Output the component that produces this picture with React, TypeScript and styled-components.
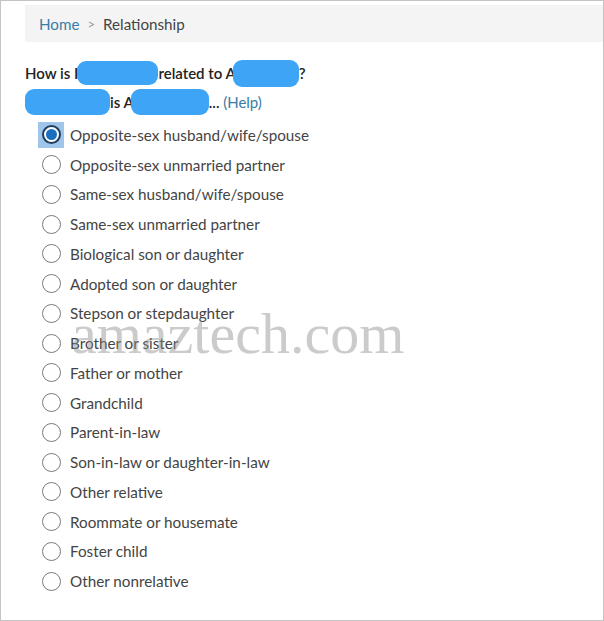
import React from 'react'
import styled, { createGlobalStyle } from 'styled-components'

const OPTIONS = [
  'Opposite-sex husband/wife/spouse',
  'Opposite-sex unmarried partner',
  'Same-sex husband/wife/spouse',
  'Same-sex unmarried partner',
  'Biological son or daughter',
  'Adopted son or daughter',
  'Stepson or stepdaughter',
  'Brother or sister',
  'Father or mother',
  'Grandchild',
  'Parent-in-law',
  'Son-in-law or daughter-in-law',
  'Other relative',
  'Roommate or housemate',
  'Foster child',
  'Other nonrelative',
]

const App = () => {
  return (
    <>
      <GlobalStyle />
      <Frame>
        <Breadcrumb>
          <Crumb href="#">Home</Crumb>
          <Sep>&gt;</Sep>
          <Current>Relationship</Current>
        </Breadcrumb>
        <Question>
          How is I<Redact w={81} h={24} style={{ marginLeft: -1 }} />
          {' '}related to A<Redact w={66} h={27} style={{ marginLeft: -3 }} />?
        </Question>
        <SubLine>
          <Redact w={85} h={26} />
          {' '}is A<Redact w={78} h={26} style={{ marginLeft: -3 }} />... <HelpLink href="#">(Help)</HelpLink>
        </SubLine>
        <OptionList>
          {OPTIONS.map((label, i) => (
            <Option key={label}>
              <RadioWrap focused={i === 0}>
                <Radio checked={i === 0} />
              </RadioWrap>
              <Label>{label}</Label>
            </Option>
          ))}
        </OptionList>
        <Watermark>amaztech.com</Watermark>
      </Frame>
    </>
  )
}

export default App

const GlobalStyle = createGlobalStyle`
  body {
    margin: 0;
    background: #fff;
    font-family: Lato, "Open Sans", sans-serif;
  }
`

const Frame = styled.div`
  position: relative;
  width: 604px;
  height: 621px;
  box-sizing: border-box;
  border: 1px solid #c4c4c4;
  padding: 4px 0 0 24px;
  overflow: hidden;
`

const Breadcrumb = styled.div`
  height: 37px;
  background: #f4f4f4;
  display: flex;
  align-items: center;
  padding-left: 14px;
  font-size: 15.2px;
  color: #444;
`

const Crumb = styled.a`
  color: #3a7ca5;
  text-decoration: none;
`

const Sep = styled.span`
  color: #999;
  margin: 0 8px;
  font-size: 13px;
`

const Current = styled.span`
  color: #444;
`

const Question = styled.div`
  margin-top: 18px;
  font-size: 15px;
  font-weight: 600;
  color: #222;
  height: 26px;
  display: flex;
  align-items: center;
  white-space: pre;
`

const SubLine = styled.div`
  margin-top: 2px;
  font-size: 15px;
  font-weight: 600;
  color: #222;
  height: 27px;
  display: flex;
  align-items: center;
  white-space: pre;
`

const HelpLink = styled.a`
  color: #3a7ca5;
  font-weight: 400;
  text-decoration: none;
`

const Redact = styled.span<{ w: number; h: number }>`
  display: inline-block;
  width: ${({ w }) => w}px;
  height: ${({ h }) => h}px;
  background: #3ea5f6;
  border-radius: 9px;
`

const OptionList = styled.div`
  margin-top: 5px;
  padding-left: 16px;
  display: flex;
  flex-direction: column;
`

const Option = styled.label`
  display: flex;
  align-items: center;
  height: 29.75px;
  gap: 9px;
`

const RadioWrap = styled.span<{ focused: boolean }>`
  width: 26px;
  height: 26px;
  margin-left: -3px;
  margin-right: -3px;
  display: flex;
  align-items: center;
  justify-content: center;
  background: ${({ focused }) => (focused ? '#9fc5ea' : 'transparent')};
`

const Radio = styled.span<{ checked: boolean }>`
  box-sizing: border-box;
  width: 19px;
  height: 19px;
  border-radius: 50%;
  background: #fff;
  border: ${({ checked }) => (checked ? '2px solid #1d3f5e' : '1px solid #7a7a7a')};
  display: flex;
  align-items: center;
  justify-content: center;

  &::after {
    content: '';
    display: ${({ checked }) => (checked ? 'block' : 'none')};
    width: 11px;
    height: 11px;
    border-radius: 50%;
    background: #1a6fc0;
  }
`

const Label = styled.span`
  font-size: 15.25px;
  color: #444;
`

const Watermark = styled.div`
  position: absolute;
  left: 70px;
  top: 299px;
  font-family: "Liberation Serif", serif;
  font-size: 58px;
  color: rgba(140, 140, 140, 0.45);
  pointer-events: none;
`
